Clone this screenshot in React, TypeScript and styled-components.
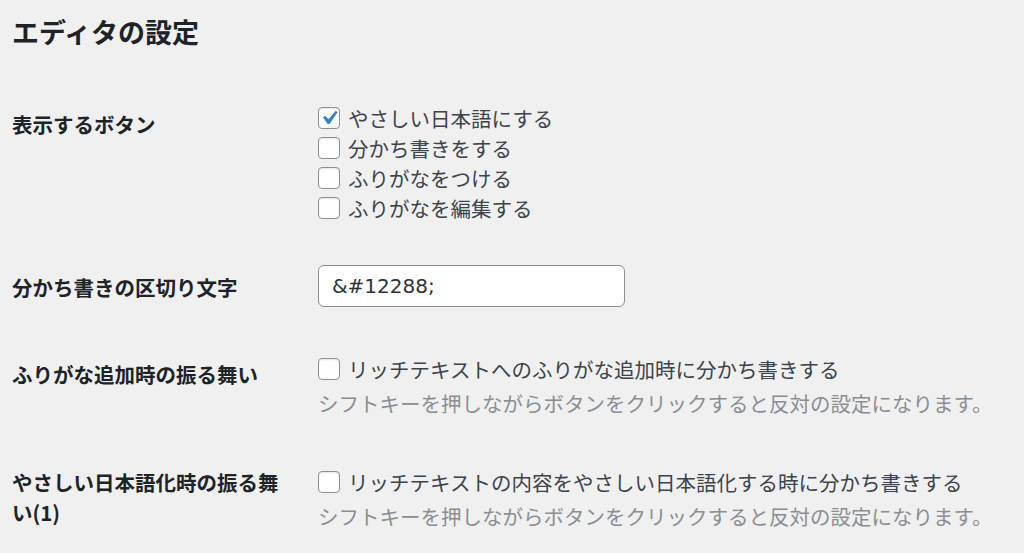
import styled, { createGlobalStyle } from 'styled-components';

const GlobalStyle = createGlobalStyle`
  html, body {
    margin: 0;
    padding: 0;
    background: #f0f0f1;
  }
  body {
    font-family: 'Noto Sans CJK JP', 'Noto Sans', sans-serif;
    font-size: 20.5px;
    color: #3c434a;
  }
`;

const Page = styled.div`
  padding: 15px 12px 0;
`;

const Title = styled.h2`
  margin: 0 0 33px;
  font-size: 27px;
  line-height: 34px;
  font-weight: 700;
  color: #1d2327;
`;

const FormTable = styled.div`
  display: flex;
  flex-direction: column;
`;

const Row = styled.div`
  display: grid;
  grid-template-columns: 280px 1fr;
  column-gap: 26px;
`;

const RowLabel = styled.div<{ $top: number }>`
  padding-top: ${p => p.$top}px;
  font-weight: 700;
  line-height: 30px;
  color: #1d2327;
`;

const RowField = styled.div<{ $top?: number; $bottom?: number }>`
  padding-top: ${p => p.$top ?? 21}px;
  padding-bottom: ${p => p.$bottom ?? 21}px;
  display: flex;
  flex-direction: column;
`;

const CheckLine = styled.label`
  display: flex;
  align-items: center;
  gap: 8px;
  height: 30px;
  white-space: nowrap;
`;

const Box = styled.span`
  position: relative;
  flex: none;
  width: 22px;
  height: 22px;
  box-sizing: border-box;
  border: 1px solid #8c8f94;
  border-radius: 4px;
  background: #fff;
  box-shadow: inset 0 1px 2px rgba(0, 0, 0, 0.1);

  svg {
    position: absolute;
    left: -4px;
    top: -4px;
  }
`;

const Description = styled.p`
  margin: 4px 0 0;
  line-height: 30px;
  color: #8a8e93;
  white-space: nowrap;
`;

const TextInput = styled.input`
  width: 307px;
  height: 42px;
  box-sizing: border-box;
  margin: 0;
  padding: 0 13px;
  border: 1px solid #8c8f94;
  border-radius: 6px;
  background: #fff;
  font-family: 'DejaVu Sans', 'Noto Sans CJK JP', sans-serif;
  font-size: 20px;
  color: #2c3338;
  outline: none;
`;

function Checkbox({ checked, children }: { checked?: boolean; children: string }) {
  return (
    <CheckLine>
      <Box>
        {checked && (
          <svg width="28" height="28" viewBox="0 0 20 20">
            <path d="M14.83 4.89l1.34.94-5.81 8.38H9.02L5.78 9.67l1.34-1.25 2.57 2.4z" fill="#3582c4" />
          </svg>
        )}
      </Box>
      {children}
    </CheckLine>
  );
}

const SHIFT_NOTE = 'シフトキーを押しながらボタンをクリックすると反対の設定になります。';

export default function App() {
  return (
    <>
      <GlobalStyle />
      <Page>
        <Title>エディタの設定</Title>
        <FormTable>
          <Row>
            <RowLabel $top={27}>表示するボタン</RowLabel>
            <RowField>
              <Checkbox checked>やさしい日本語にする</Checkbox>
              <Checkbox>分かち書きをする</Checkbox>
              <Checkbox>ふりがなをつける</Checkbox>
              <Checkbox>ふりがなを編集する</Checkbox>
            </RowField>
          </Row>
          <Row>
            <RowLabel $top={28}>分かち書きの区切り文字</RowLabel>
            <RowField $bottom={25}>
              <TextInput type="text" defaultValue={'&#12288;'} />
            </RowField>
          </Row>
          <Row>
            <RowLabel $top={27}>ふりがな追加時の振る舞い</RowLabel>
            <RowField $top={22} $bottom={27}>
              <Checkbox>リッチテキストへのふりがな追加時に分かち書きする</Checkbox>
              <Description>{SHIFT_NOTE}</Description>
            </RowField>
          </Row>
          <Row>
            <RowLabel $top={22}>やさしい日本語化時の振る舞い(1)</RowLabel>
            <RowField $top={22}>
              <Checkbox>リッチテキストの内容をやさしい日本語化する時に分かち書きする</Checkbox>
              <Description>{SHIFT_NOTE}</Description>
            </RowField>
          </Row>
        </FormTable>
      </Page>
    </>
  );
}
